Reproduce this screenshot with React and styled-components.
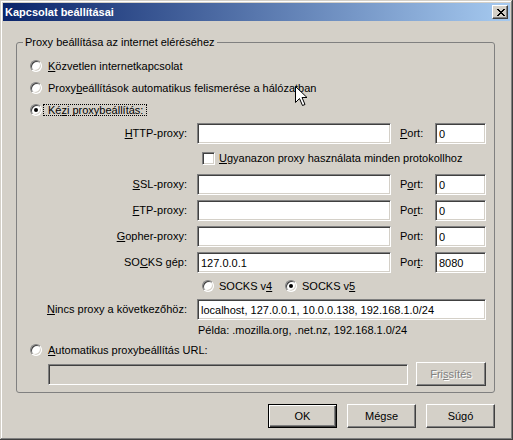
import styled, { createGlobalStyle, css } from 'styled-components'

const Global = createGlobalStyle`
  html, body {
    margin: 0;
    padding: 0;
    background: #d4d0c8;
    overflow: hidden;
  }
  body {
    font-family: "Liberation Sans", Arial, sans-serif;
    font-size: 11px;
    color: #000;
  }
`

const sunken = css`
  border: 1px solid;
  border-color: #808080 #fff #fff #808080;
  box-shadow: inset 1px 1px #404040, inset -1px -1px #d4d0c8;
`

const raised = css`
  border: 1px solid;
  border-color: #fff #404040 #404040 #fff;
  box-shadow: inset -1px -1px #808080, inset 1px 1px #d4d0c8;
`

const Window = styled.div`
  position: relative;
  width: 513px;
  height: 440px;
  box-sizing: border-box;
  padding: 3px;
  background: #d4d0c8;
  box-shadow: inset -1px -1px #404040, inset 1px 1px #d4d0c8, inset -2px -2px #808080, inset 2px 2px #fff;
  display: flex;
  flex-direction: column;
`

const TitleBar = styled.div`
  height: 18px;
  flex: none;
  display: flex;
  align-items: center;
  justify-content: space-between;
  padding: 0 2px;
  background: linear-gradient(to right, #0a246a, #a6caf0);
`

const Title = styled.span`
  color: #fff;
  font-weight: bold;
  line-height: 13px;
`

const CloseButton = styled.button`
  width: 16px;
  height: 14px;
  box-sizing: border-box;
  padding: 0 0 0 1px;
  background: #d4d0c8;
  display: flex;
  align-items: center;
  justify-content: center;
  ${raised}
`

const Group = styled.fieldset`
  width: 479px;
  box-sizing: border-box;
  margin: 15px 0 0 13px;
  padding: 0;
  min-inline-size: 0;
  border: 1px solid #808080;
  border-radius: 3px;
`

const Legend = styled.legend`
  margin-left: 6px;
  padding: 0 2px;
  line-height: 13px;
`

const Content = styled.div`
  display: flex;
  flex-direction: column;
  padding: 9px 0 6px 13px;
`

const Option = styled.label`
  display: flex;
  align-items: center;
  height: 16px;
  gap: ${p => p.$gap ?? 6}px;
  width: ${p => (p.$w ? `${p.$w}px` : 'auto')};
  margin-top: ${p => p.$mt ?? 0}px;
  line-height: 13px;
  white-space: nowrap;
  flex: none;
`

const RadioDot = styled.span`
  position: relative;
  flex: none;
  width: 12px;
  height: 12px;
  box-sizing: border-box;
  border-radius: 50%;
  background: #fff;
  ${sunken}
  &::after {
    content: '';
    display: ${p => (p.$checked ? 'block' : 'none')};
    position: absolute;
    left: 3px;
    top: 3px;
    width: 4px;
    height: 4px;
    border-radius: 50%;
    background: #000;
  }
`

const CheckBox = styled.span`
  flex: none;
  width: 13px;
  height: 13px;
  box-sizing: border-box;
  background: #fff;
  ${sunken}
`

const Focus = styled.span`
  padding: 0 4px 0 5px;
  margin-left: -5px;
  outline: 1px dotted #000;
  outline-offset: -1px;
`

const Manual = styled.div`
  display: flex;
  flex-direction: column;
  margin-left: 18px;
`

const Row = styled.div`
  display: flex;
  align-items: center;
  margin-top: ${p => p.$mt ?? 0}px;
  padding-left: ${p => p.$indent ?? 0}px;
  line-height: 13px;
  white-space: nowrap;
`

const FieldLabel = styled.span`
  display: flex;
  justify-content: flex-end;
  width: 139px;
  margin-right: 10px;
  flex: none;
`

const PortLabel = styled.span`
  width: 35px;
  margin-left: 9px;
  flex: none;
`

const Field = styled.input`
  width: ${p => p.$w}px;
  height: 21px;
  box-sizing: border-box;
  flex: none;
  margin: 0;
  padding: 0 3px;
  font: inherit;
  color: #000;
  outline: none;
  background: ${p => (p.$disabled ? '#d4d0c8' : '#fff')};
  ${sunken}
`

const Button = styled.button`
  width: ${p => p.$w ?? 69}px;
  height: 24px;
  box-sizing: border-box;
  flex: none;
  padding: 0;
  font: inherit;
  color: #000;
  background: #d4d0c8;
  ${raised}
  ${p => p.$default && css`
    border-color: #000;
    box-shadow: inset 1px 1px #fff, inset -1px -1px #404040, inset -2px -2px #808080;
  `}
  ${p => p.$disabled && css`
    color: #808080;
    text-shadow: 1px 1px #fff;
  `}
`

const UrlRow = styled.div`
  display: flex;
  align-items: center;
  gap: 8px;
  margin: 4px 0 0 18px;
`

const Footer = styled.div`
  display: flex;
  justify-content: flex-end;
  gap: 10px;
  margin-top: 11px;
  padding-right: 15px;
`

const Cursor = styled.svg`
  position: absolute;
  left: 295px;
  top: 86px;
`

function Radio({ checked, children, ...rest }) {
  return (
    <Option {...rest}>
      <RadioDot $checked={checked} />
      <span>{children}</span>
    </Option>
  )
}

function ProxyRow({ label, port, portValue, value = '', mt }) {
  return (
    <Row $mt={mt}>
      <FieldLabel>{label}</FieldLabel>
      <Field $w={194} defaultValue={value} />
      <PortLabel>{port}</PortLabel>
      <Field $w={51} defaultValue={portValue} />
    </Row>
  )
}

export default function App() {
  return (
    <Window>
      <Global />
      <TitleBar>
        <Title>Kapcsolat beállításai</Title>
        <CloseButton>
          <svg width="8" height="7" viewBox="0 0 8 7" shapeRendering="crispEdges">
            <path d="M0 0h2v1H0zM6 0h2v1H6zM1 1h2v1H1zM5 1h2v1H5zM2 2h4v1H2zM3 3h2v1H3zM2 4h4v1H2zM1 5h2v1H1zM5 5h2v1H5zM0 6h2v1H0zM6 6h2v1H6z" fill="#000" />
          </svg>
        </CloseButton>
      </TitleBar>

      <Group>
        <Legend>Proxy beállítása az internet eléréséhez</Legend>
        <Content>
          <Radio><u>K</u>özvetlen internetkapcsolat</Radio>
          <Radio $mt={6}>Proxy<u>b</u>eállítások automatikus felismerése a hálózatban</Radio>
          <Radio $mt={6} checked><Focus>Ké<u>z</u>i proxybeállítás:</Focus></Radio>

          <Manual>
            <ProxyRow mt={5} label={<span><u>H</u>TTP-proxy:</span>} port={<span><u>P</u>ort:</span>} portValue="0" />
            <Row $mt={6} $indent={154}>
              <Option $gap={4}>
                <CheckBox />
                <span><u>U</u>gyanazon proxy használata minden protokollhoz</span>
              </Option>
            </Row>
            <ProxyRow mt={8} label={<span><u>S</u>SL-proxy:</span>} port={<span>P<u>o</u>rt:</span>} portValue="0" />
            <ProxyRow mt={5} label={<span><u>F</u>TP-proxy:</span>} port={<span>Po<u>r</u>t:</span>} portValue="0" />
            <ProxyRow mt={5} label={<span><u>G</u>opher-proxy:</span>} port={<span>Port:</span>} portValue="0" />
            <ProxyRow mt={5} label={<span>SO<u>C</u>KS gép:</span>} value="127.0.0.1" port={<span>Por<u>t</u>:</span>} portValue="8080" />
            <Row $mt={5} $indent={154}>
              <Radio $gap={5} $w={83}>SOCKS v<u>4</u></Radio>
              <Radio $gap={5} checked>SOCKS v<u>5</u></Radio>
            </Row>
            <Row $mt={5}>
              <FieldLabel><span><u>N</u>incs proxy a következőhöz:</span></FieldLabel>
              <Field $w={289} defaultValue="localhost, 127.0.0.1, 10.0.0.138, 192.168.1.0/24" />
            </Row>
            <Row $mt={4} $indent={150}>Példa: .mozilla.org, .net.nz, 192.168.1.0/24</Row>
          </Manual>

          <Radio $mt={5}><u>A</u>utomatikus proxybeállítás URL:</Radio>
          <UrlRow>
            <Field $w={360} $disabled disabled />
            <Button $w={70} $disabled>Fri<u>s</u>sítés</Button>
          </UrlRow>
        </Content>
      </Group>

      <Footer>
        <Button $default>OK</Button>
        <Button>Mégse</Button>
        <Button>Súgó</Button>
      </Footer>

      <Cursor width="13" height="21" viewBox="0 0 13 21">
        <path d="M0.5 0.5V16.5L4.5 12.5L7.5 19.5L10 18.5L7 11.5H12Z" fill="#fff" stroke="#000" strokeWidth="1" strokeLinejoin="miter" />
      </Cursor>
    </Window>
  )
}
